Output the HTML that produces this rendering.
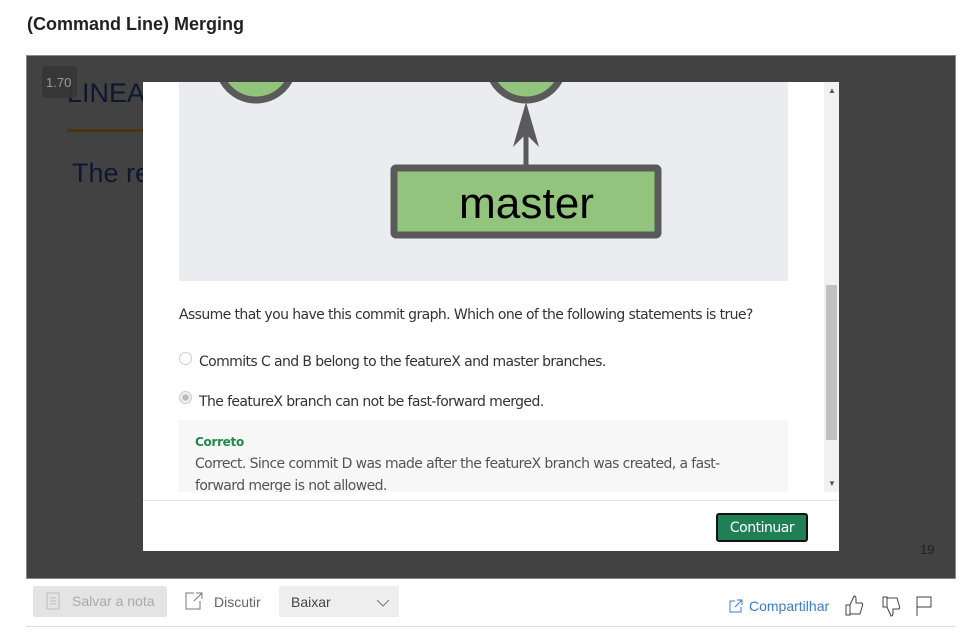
<!DOCTYPE html>
<html><head><style>
body{margin:0;width:977px;height:642px;background:#fff;font-family:"Liberation Sans",sans-serif;position:relative;overflow:hidden}
.abs{position:absolute}
h1{position:absolute;left:27px;top:14px;margin:0;font-size:18px;font-weight:bold;color:#222}
.q{font-family:"DejaVu Sans","Liberation Sans",sans-serif;font-size:14px;color:#333;letter-spacing:-0.6px}
</style></head><body>
<h1>(Command Line) Merging</h1>
<div class="abs" style="left:26px;top:55px;width:928px;height:522px;background:#424242;border:1px solid #888"></div>
<div class="abs" style="left:67px;top:78px;font-size:27px;color:#0d1730">LINEAR</div>
<div class="abs" style="left:42px;top:66px;width:35px;height:32px;background:#363636;border-radius:4px;opacity:.9"></div>
<div class="abs" style="left:46px;top:75px;font-size:13px;color:#999">1.70</div>
<div class="abs" style="left:67px;top:129px;width:80px;height:3px;background:#4a3510"></div>
<div class="abs" style="left:72px;top:158px;font-size:27px;color:#0d1730">The re</div>
<div class="abs" style="left:920px;top:542px;font-size:13px;color:#222">19</div>

<div class="abs" style="left:143px;top:82px;width:696px;height:469px;background:#fff;overflow:hidden">
  <svg class="abs" style="left:36px;top:0" width="609" height="199">
    <rect width="609" height="199" fill="#ebecf0"/>
    <circle cx="77" cy="-20" r="38" fill="#93c47d" stroke="#5a5a5a" stroke-width="7"/>
    <circle cx="347" cy="-20" r="38" fill="#93c47d" stroke="#5a5a5a" stroke-width="7"/>
    <line x1="347" y1="40" x2="347" y2="86" stroke="#5a5a5a" stroke-width="5"/>
    <polygon points="347,20 334,65 347,52 360,65" fill="#5a5a5a"/>
    <rect x="215" y="86" width="264" height="67" rx="2" fill="#93c47d" stroke="#5a5a5a" stroke-width="7"/>
    <text x="280" y="136" textLength="135" lengthAdjust="spacingAndGlyphs" font-family="Liberation Sans" font-size="44" fill="#000">master</text>
  </svg>
  <div class="abs q" style="left:36px;top:225px">Assume that you have this commit graph. Which one of the following statements is true?</div>
  <div class="abs" style="left:36px;top:270px;width:11px;height:11px;border:1px solid #ccc;border-radius:50%"></div>
  <div class="abs q" style="left:56px;top:272px">Commits C and B belong to the featureX and master branches.</div>
  <div class="abs" style="left:36px;top:309px;width:11px;height:11px;border:1px solid #ccc;border-radius:50%;background:radial-gradient(#bbb 35%,#eee 45%)"></div>
  <div class="abs q" style="left:56px;top:312px">The featureX branch can not be fast-forward merged.</div>
  <div class="abs" style="left:36px;top:338px;width:609px;height:80px;background:#f7f7f7"></div>
  <div class="abs q" style="left:52px;top:353px;font-size:12px;font-weight:bold;color:#1f8a4c;letter-spacing:-0.3px">Correto</div>
  <div class="abs q" style="left:52px;top:374px;color:#555">Correct. Since commit D was made after the featureX branch was created, a fast-<br><span style="line-height:28px">forward merge is not allowed.</span></div>
  <div class="abs" style="left:0;top:410px;width:681px;height:8px;background:#fff"></div>
  <div class="abs" style="left:0;top:418px;width:696px;height:51px;background:#fff;border-top:1px solid #e5e5e5"></div>
  <div class="abs" style="left:573px;top:431px;width:88px;height:25px;background:#1f8055;border:2px solid #111;border-radius:3px;color:#fff;font-size:14px;text-align:center;line-height:27px;font-family:'DejaVu Sans',sans-serif;letter-spacing:-0.5px">Continuar</div>
  <div class="abs" style="left:681px;top:0;width:15px;height:410px;background:#f1f1f1"></div>
  <div class="abs" style="left:683px;top:203px;width:11px;height:155px;background:#c1c1c1"></div>
  <div class="abs" style="left:685px;top:4px;font-size:8px;color:#555">▲</div>
  <div class="abs" style="left:685px;top:397px;font-size:8px;color:#555">▼</div>
</div>

<div class="abs" style="left:33px;top:586px;width:134px;height:31px;background:#e4e4e4;border-radius:2px"></div>
<svg class="abs" style="left:46px;top:591px" width="16" height="20"><rect x="1" y="2" width="12" height="16" fill="none" stroke="#bbb"/><path d="M4 7h6M4 10h6M4 13h6" stroke="#bbb"/></svg>
<div class="abs" style="left:72px;top:593px;font-size:14px;color:#aaa">Salvar a nota</div>
<svg class="abs" style="left:184px;top:591px" width="20" height="20"><path d="M10 2H2v16h14V10M12 2h6v6M18 2l-8 8" fill="none" stroke="#777"/></svg>
<div class="abs" style="left:214px;top:594px;font-size:14px;color:#666">Discutir</div>
<div class="abs" style="left:279px;top:586px;width:120px;height:31px;background:#eee;border-radius:2px"></div>
<div class="abs" style="left:291px;top:594px;font-size:14px;color:#444">Baixar</div>
<svg class="abs" style="left:376px;top:598px" width="14" height="10"><path d="M1 2l6 6 6-6" fill="none" stroke="#777"/></svg>
<svg class="abs" style="left:729px;top:599px" width="14" height="14"><path d="M6 2H1v11h11V8M8 1h5v5M13 1L6 8" fill="none" stroke="#3a7bd5"/></svg>
<div class="abs" style="left:749px;top:598px;font-size:14px;color:#3a7bd5">Compartilhar</div>
<svg class="abs" style="left:843px;top:594px" width="22" height="24"><path d="M3 11h4v10H3zM7 11l4-9c2 0 2 2 2 4v3h5c2 0 2 2 1 4l-2 7H7" fill="none" stroke="#444"/></svg>
<svg class="abs" style="left:880px;top:594px" width="22" height="24"><path d="M3 3h4v10H3zM7 13l4 9c2 0 2-2 2-4v-3h5c2 0 2-2 1-4l-2-7H7" fill="none" stroke="#444"/></svg>
<svg class="abs" style="left:914px;top:594px" width="20" height="24"><path d="M3 22V3h14v10H3" fill="none" stroke="#444"/></svg>
<div class="abs" style="left:26px;top:626px;width:929px;height:1px;background:#ddd"></div>
</body></html>
